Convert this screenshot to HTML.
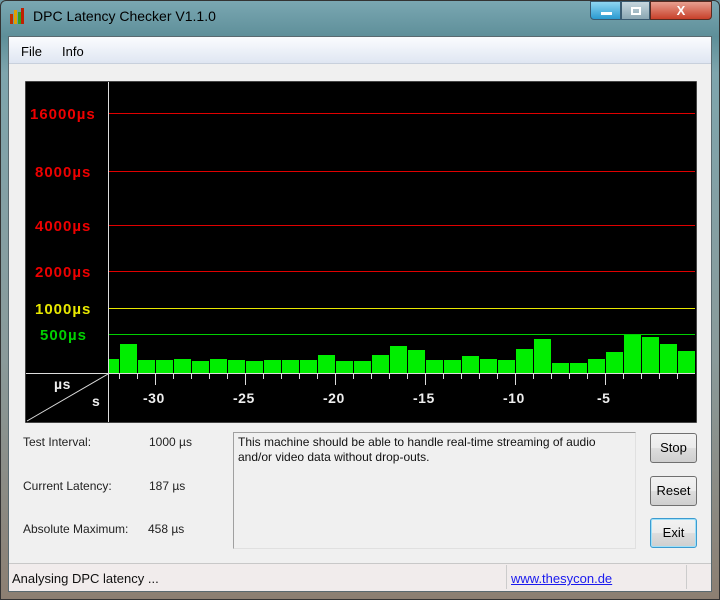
<!DOCTYPE html>
<html><head><style>
*{margin:0;padding:0;box-sizing:border-box}
body{width:720px;height:600px;position:relative;overflow:hidden;font-family:"Liberation Sans",sans-serif;font-size:12px;background:#6c98a4}
.a{position:absolute}
.frame{left:0;top:0;width:720px;height:600px;background:linear-gradient(180deg,#7aa7b2 0%,#5e8f99 6%,#7ea5ad 12%,#8a9a9a 60%,#8c7f72 100%);border:1px solid #333;border-radius:6px 6px 0 0}
.client{left:8px;top:36px;width:704px;height:556px;background:#f0f0f0;border:1px solid #5a6a70}
.menu{left:9px;top:37px;width:702px;height:27px;background:linear-gradient(#fbfcfe,#dfe6f2);border-bottom:1px solid #c8d0dc}
.lbl{color:#222}
.btn{left:650px;width:47px;height:30px;border:1px solid #707070;border-radius:3px;background:linear-gradient(#f2f2f2 0%,#ebebeb 50%,#dddddd 51%,#cfcfcf 100%);text-align:center;line-height:28px;font-size:13px;color:#000}
</style></head><body>
<div class="a frame"></div>
<div class="a" style="left:10px;top:8px;width:14px;height:16px">
<div class="a" style="left:0;top:6px;width:3px;height:10px;background:#c03000"></div>
<div class="a" style="left:4px;top:2px;width:3px;height:14px;background:#e0a000"></div>
<div class="a" style="left:8px;top:4px;width:3px;height:12px;background:#30a020"></div>
<div class="a" style="left:11px;top:0;width:3px;height:16px;background:#c02000"></div>
</div>
<div class="a" style="left:33px;top:8px;font-size:14px;color:#000">DPC Latency Checker V1.1.0</div>
<div class="a" style="left:590px;top:1px;width:31px;height:19px;background:linear-gradient(#8fd6f2,#2a9ad0);border:1px solid #3a5a70;border-radius:0 0 0 4px"><div class="a" style="left:10px;top:10px;width:11px;height:3px;background:#fff"></div></div>
<div class="a" style="left:621px;top:1px;width:29px;height:19px;background:linear-gradient(#c6d6de,#8aa6b2);border:1px solid #3a5a70"><div class="a" style="left:9px;top:5px;width:10px;height:8px;border:2px solid #fff"></div></div>
<div class="a" style="left:650px;top:1px;width:62px;height:19px;background:linear-gradient(#e8a090,#c8402a);border:1px solid #5a2a20;border-radius:0 0 4px 0;color:#fff;font-weight:bold;text-align:center;font-size:13px;line-height:18px">X</div>
<div class="a client"></div>
<div class="a menu"></div>
<div class="a" style="left:21px;top:44px;font-size:13px">File</div>
<div class="a" style="left:62px;top:44px;font-size:13px">Info</div>

<svg class="a" style="left:25px;top:81px" width="672" height="342" viewBox="25 81 672 342">
<rect x="25" y="81" width="672" height="342" fill="#000" stroke="#888" stroke-width="1"/>
<line x1="108.5" y1="82" x2="108.5" y2="422" stroke="#ddd"/>
<g stroke="#e00000" stroke-width="1">
<line x1="109" y1="113.5" x2="695" y2="113.5"/>
<line x1="109" y1="171.5" x2="695" y2="171.5"/>
<line x1="109" y1="225.5" x2="695" y2="225.5"/>
<line x1="109" y1="271.5" x2="695" y2="271.5"/>
</g>
<line x1="109" y1="308.5" x2="695" y2="308.5" stroke="#e8e800"/>
<line x1="109" y1="334.5" x2="695" y2="334.5" stroke="#00d000"/>
<g fill="#00ee00">
<rect x="109" y="359" width="10" height="14"/>
<rect x="120" y="344" width="17" height="29"/><rect x="138" y="360" width="17" height="13"/><rect x="156" y="360" width="17" height="13"/><rect x="174" y="359" width="17" height="14"/><rect x="192" y="361" width="17" height="12"/><rect x="210" y="359" width="17" height="14"/><rect x="228" y="360" width="17" height="13"/><rect x="246" y="361" width="17" height="12"/><rect x="264" y="360" width="17" height="13"/><rect x="282" y="360" width="17" height="13"/><rect x="300" y="360" width="17" height="13"/><rect x="318" y="355" width="17" height="18"/><rect x="336" y="361" width="17" height="12"/><rect x="354" y="361" width="17" height="12"/><rect x="372" y="355" width="17" height="18"/><rect x="390" y="346" width="17" height="27"/><rect x="408" y="350" width="17" height="23"/><rect x="426" y="360" width="17" height="13"/><rect x="444" y="360" width="17" height="13"/><rect x="462" y="356" width="17" height="17"/><rect x="480" y="359" width="17" height="14"/><rect x="498" y="360" width="17" height="13"/><rect x="516" y="349" width="17" height="24"/><rect x="534" y="339" width="17" height="34"/><rect x="552" y="363" width="17" height="10"/><rect x="570" y="363" width="17" height="10"/><rect x="588" y="359" width="17" height="14"/><rect x="606" y="352" width="17" height="21"/><rect x="624" y="335" width="17" height="38"/><rect x="642" y="337" width="17" height="36"/><rect x="660" y="344" width="17" height="29"/><rect x="678" y="351" width="17" height="22"/>
</g>
<line x1="26" y1="373.5" x2="695" y2="373.5" stroke="#ddd"/>
<line x1="27" y1="421" x2="108" y2="374" stroke="#ddd"/>
<g stroke="#ddd">
<line x1="119.5" y1="374" x2="119.5" y2="379"/><line x1="137.5" y1="374" x2="137.5" y2="379"/><line x1="155.5" y1="374" x2="155.5" y2="385"/><line x1="173.5" y1="374" x2="173.5" y2="379"/><line x1="191.5" y1="374" x2="191.5" y2="379"/><line x1="209.5" y1="374" x2="209.5" y2="379"/><line x1="227.5" y1="374" x2="227.5" y2="379"/><line x1="245.5" y1="374" x2="245.5" y2="385"/><line x1="263.5" y1="374" x2="263.5" y2="379"/><line x1="281.5" y1="374" x2="281.5" y2="379"/><line x1="299.5" y1="374" x2="299.5" y2="379"/><line x1="317.5" y1="374" x2="317.5" y2="379"/><line x1="335.5" y1="374" x2="335.5" y2="385"/><line x1="353.5" y1="374" x2="353.5" y2="379"/><line x1="371.5" y1="374" x2="371.5" y2="379"/><line x1="389.5" y1="374" x2="389.5" y2="379"/><line x1="407.5" y1="374" x2="407.5" y2="379"/><line x1="425.5" y1="374" x2="425.5" y2="385"/><line x1="443.5" y1="374" x2="443.5" y2="379"/><line x1="461.5" y1="374" x2="461.5" y2="379"/><line x1="479.5" y1="374" x2="479.5" y2="379"/><line x1="497.5" y1="374" x2="497.5" y2="379"/><line x1="515.5" y1="374" x2="515.5" y2="385"/><line x1="533.5" y1="374" x2="533.5" y2="379"/><line x1="551.5" y1="374" x2="551.5" y2="379"/><line x1="569.5" y1="374" x2="569.5" y2="379"/><line x1="587.5" y1="374" x2="587.5" y2="379"/><line x1="605.5" y1="374" x2="605.5" y2="385"/><line x1="623.5" y1="374" x2="623.5" y2="379"/><line x1="641.5" y1="374" x2="641.5" y2="379"/><line x1="659.5" y1="374" x2="659.5" y2="379"/><line x1="677.5" y1="374" x2="677.5" y2="379"/>
</g>
<g fill="#ee0000" font-weight="bold" font-size="15" letter-spacing="1">
<text x="30" y="119">16000µs</text><text x="35" y="177">8000µs</text><text x="35" y="231">4000µs</text><text x="35" y="277">2000µs</text>
</g>
<text x="35" y="314" fill="#e8e800" font-weight="bold" font-size="15" letter-spacing="1">1000µs</text>
<text x="40" y="340" fill="#00d000" font-weight="bold" font-size="15" letter-spacing="1">500µs</text>
<g fill="#eee" font-weight="bold" font-size="14" letter-spacing="0.5">
<text x="54" y="389">µs</text><text x="92" y="406">s</text>
<text x="143" y="403">-30</text><text x="233" y="403">-25</text><text x="323" y="403">-20</text><text x="413" y="403">-15</text><text x="503" y="403">-10</text><text x="597" y="403">-5</text>
</g>
</svg>

<div class="a lbl" style="left:23px;top:435px">Test Interval:</div>
<div class="a lbl" style="left:149px;top:435px">1000 µs</div>
<div class="a lbl" style="left:23px;top:479px">Current Latency:</div>
<div class="a lbl" style="left:149px;top:479px">187 µs</div>
<div class="a lbl" style="left:23px;top:522px">Absolute Maximum:</div>
<div class="a lbl" style="left:148px;top:522px">458 µs</div>
<div class="a" style="left:233px;top:432px;width:403px;height:117px;border:1px solid #a0a0a0;border-right-color:#e0e0e0;border-bottom-color:#e0e0e0;background:#f0f0f0;padding:2px 4px;line-height:15px;color:#111">This machine should be able to handle real-time streaming of audio and/or video data without drop-outs.</div>
<div class="a btn" style="top:433px">Stop</div>
<div class="a btn" style="top:476px">Reset</div>
<div class="a btn" style="top:518px;border-color:#3c9bd0;box-shadow:inset 0 0 0 1px #9ee0f8">Exit</div>
<div class="a" style="left:9px;top:563px;width:702px;height:28px;background:#f1ecec;border-top:1px solid #c8c8c8"></div>
<div class="a" style="left:506px;top:565px;width:1px;height:24px;background:#ccc"></div>
<div class="a" style="left:686px;top:565px;width:1px;height:24px;background:#ccc"></div>
<div class="a" style="left:12px;top:571px;font-size:13px;color:#111">Analysing DPC latency ...</div>
<div class="a" style="left:511px;top:571px;font-size:13px;color:#1a1aee;text-decoration:underline">www.thesycon.de</div>
</body></html>
